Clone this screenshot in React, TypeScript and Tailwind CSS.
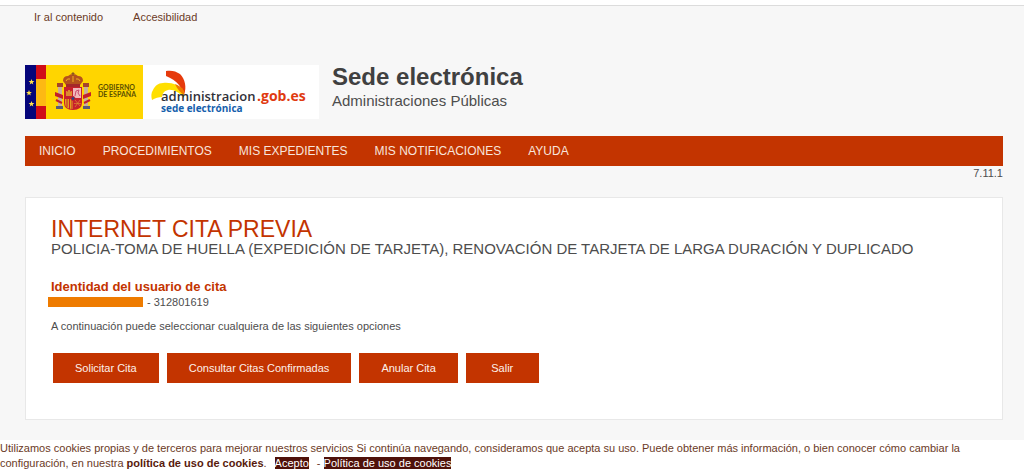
const menu = ["INICIO", "PROCEDIMIENTOS", "MIS EXPEDIENTES", "MIS NOTIFICACIONES", "AYUDA"];

const actions = ["Solicitar Cita", "Consultar Citas Confirmadas", "Anular Cita", "Salir"];

const star = "M0 -3 L0.8 -1 L2.9 -0.9 L1.2 0.4 L1.8 2.5 L0 1.3 L-1.8 2.5 L-1.2 0.4 L-2.9 -0.9 L-0.8 -1 Z";

function GobiernoLogo() {
  return (
    <svg viewBox="0 0 118 54" className="h-[54px] w-[118px]" role="img" aria-label="Gobierno de España">
      <rect width="118" height="54" fill="#ffd500" />
      <rect width="11" height="54" fill="#05057a" />
      <rect x="11" width="10" height="54" fill="#d00d18" />
      <rect x="11" y="14" width="10" height="27" fill="#fdb913" />
      <g fill="#ffe14a">
        <path d={star} transform="translate(6.5 17)" />
        <path d={star} transform="translate(4 28)" />
        <path d={star} transform="translate(6.5 39)" />
      </g>
      {/* crown */}
      <path d="M38 16 Q38 11 43 11 Q45 9 48 9 Q51 9 53 11 Q58 11 58 16 L55 20 H41 Z" fill="#b5521d" />
      <path d="M41 16 Q42 13 45 14 M55 16 Q54 13 51 14 M48 11 V17" fill="none" stroke="#f0b020" strokeWidth="1" />
      <path d="M41 19 H55 V22 H41 Z" fill="#a5282a" />
      <path d="M48 7 V11 M46.5 8.5 H49.5" stroke="#8a5a20" strokeWidth="1" />
      {/* pillars */}
      <path d="M33 21 H37 V42 H33 Z M59 21 H63 V42 H59 Z" fill="#c9b09a" />
      <path d="M32 18 H38 V22 H32 Z M58 18 H64 V22 H58 Z" fill="#a5452a" />
      <path d="M31 41 H38 V44 H31 Z M58 41 H65 V44 H58 Z" fill="#5b5a78" />
      <path d="M30 27 L38 30 V34 L30 31 Z M66 27 L58 30 V34 L66 31 Z" fill="#c4202a" />
      <path d="M31 35 L37 38 M65 35 L59 38" stroke="#c4202a" strokeWidth="2" />
      {/* shield */}
      <path d="M39 22 H57 V38 Q57 45 48 45 Q39 45 39 38 Z" fill="#c8202c" />
      <path d="M48 23 H56 V33 H48 Z" fill="#f0b8bc" />
      <path d="M50 31 L51 26 L54 25 L53 28 L55 31" fill="none" stroke="#cc4a70" strokeWidth="1" />
      <path d="M41 31 V26 H42.5 V27 H43 V25 H45 V27 H45.5 V26 H47 V31 Z" fill="#dd8a30" />
      <path d="M40 34 H48 V44 Q40 44 40 38 Z" fill="#e0a020" />
      <path d="M42 34 V42 M44.5 34 V44 M47 34 V44" stroke="#c8202c" strokeWidth="1" />
      <path d="M50 35 L55 41 M55 35 L50 42 M49 38.5 H56" stroke="#dd8a30" strokeWidth="0.7" />
      <circle cx="48" cy="33.5" r="2" fill="#35427e" stroke="#c8202c" />
      <g fill="#5c5000" fontFamily="Lato, sans-serif" fontSize="7" fontWeight="700">
        <text x="73" y="25">GOBIERNO</text>
        <text x="73" y="32">DE ESPAÑA</text>
      </g>
    </svg>
  );
}

function AdministracionLogo() {
  return (
    <svg viewBox="0 0 176 54" className="h-[54px] w-[176px]" role="img" aria-label="administracion.gob.es sede electrónica">
      <rect width="176" height="54" fill="#fff" />
      <path
        d="M9 35 C8 31 8 28 10 25 C12 21 15 18 20 18 C28 17 37 20 41 27 L41 33 C36 27 30 24 25 25 C21 26 19 29 19 32 C16 32 12 33 9 35 Z"
        fill="#ffdf00"
      />
      <path d="M23 6 C28 5 33 6 37 9 C42 14 44 22 41 30 C40 26 38 23 36 20 C33 16 28 13 23 11 Z" fill="#e63a0c" />
      <path d="M32 19 C35 20 39 22 41 26 L41 30 C38 28 34 24 32 19 Z" fill="#f07a00" />
      <g fontFamily="'Open Sans', sans-serif" fontWeight="600">
        <text x="18" y="36" fontSize="13" fill="#303038">administracion</text>
        <text x="114" y="36" fontSize="14" fontWeight="700" fill="#e03a10">.gob.es</text>
        <text x="18" y="47" fontSize="10" fontWeight="700" fill="#1560ac">sede electrónica</text>
      </g>
    </svg>
  );
}

export default function App() {
  return (
    <div className="bg-white font-['Liberation_Sans',Arial,sans-serif] text-[11px] leading-[15px] text-[#4d4d4d]">
      <div className="mt-[5px] border-t border-[#dcdcdc] bg-[#f7f7f7] pb-5">
        <div className="flex gap-[30px] px-[34px] pt-1 text-[#6b3a26]">
          <a href="#contenido">Ir al contenido</a>
          <a href="#accesibilidad">Accesibilidad</a>
        </div>

        <div className="pr-[21px] pl-[25px]">
          <header className="mt-10 flex gap-[13px]">
            <div className="flex shrink-0">
              <GobiernoLogo />
              <AdministracionLogo />
            </div>
            <div>
              <p className="text-2xl leading-6 font-bold text-[#404040]">Sede electrónica</p>
              <p className="text-[15px] leading-6">Administraciones Públicas</p>
            </div>
          </header>

          <nav className="mt-[17px] flex h-[30px] items-center gap-[27px] bg-[#c33400] px-[14px] text-[12px] text-[#f8e4dc]">
            {menu.map((item) => (
              <a key={item} href="#menu">{item}</a>
            ))}
          </nav>
          <p className="text-right">7.11.1</p>

          <main id="contenido" className="mt-4 border border-[#e8e8e8] bg-white px-[25px] pt-[19px] pb-9">
            <h1 className="text-[23px] leading-6 text-[#c33400]">INTERNET CITA PREVIA</h1>
            <h2 className="text-[15px] leading-4">
              POLICIA-TOMA DE HUELLA (EXPEDICIÓN DE TARJETA), RENOVACIÓN DE TARJETA DE LARGA DURACIÓN Y DUPLICADO
            </h2>
            <h3 className="mt-[22px] text-[13px] leading-4 font-bold text-[#c33400]">Identidad del usuario de cita</h3>
            <p className="flex items-center gap-1 leading-[14px]">
              <span className="-ml-[3px] h-[10px] w-[95px] bg-[#ee7b00]" />
              - 312801619
            </p>
            <p className="mt-[10px]">A continuación puede seleccionar cualquiera de las siguientes opciones</p>
            <div className="mt-[19px] ml-[2px] flex flex-wrap gap-2">
              {actions.map((label) => (
                <button
                  key={label}
                  type="button"
                  className="h-[30px] min-w-[73px] bg-[#c33400] px-[22px] text-[#fdf0ea]"
                >
                  {label}
                </button>
              ))}
            </div>
          </main>
        </div>
      </div>

      <footer className="pt-px text-[#6b3a26]">
        Utilizamos cookies propias y de terceros para mejorar nuestros servicios Si continúa navegando, consideramos que
        acepta su uso. Puede obtener más información, o bien conocer cómo cambiar la configuración, en nuestra{" "}
        <a href="#cookies" className="font-bold text-[#581a0c]">política de uso de cookies</a>.
        <button type="button" className="mx-2 bg-[#4f110a] leading-3 text-white">Acepto</button>-{" "}
        <a href="#cookies" className="bg-[#4f110a] text-white">Política de uso de cookies</a>
      </footer>
    </div>
  );
}
